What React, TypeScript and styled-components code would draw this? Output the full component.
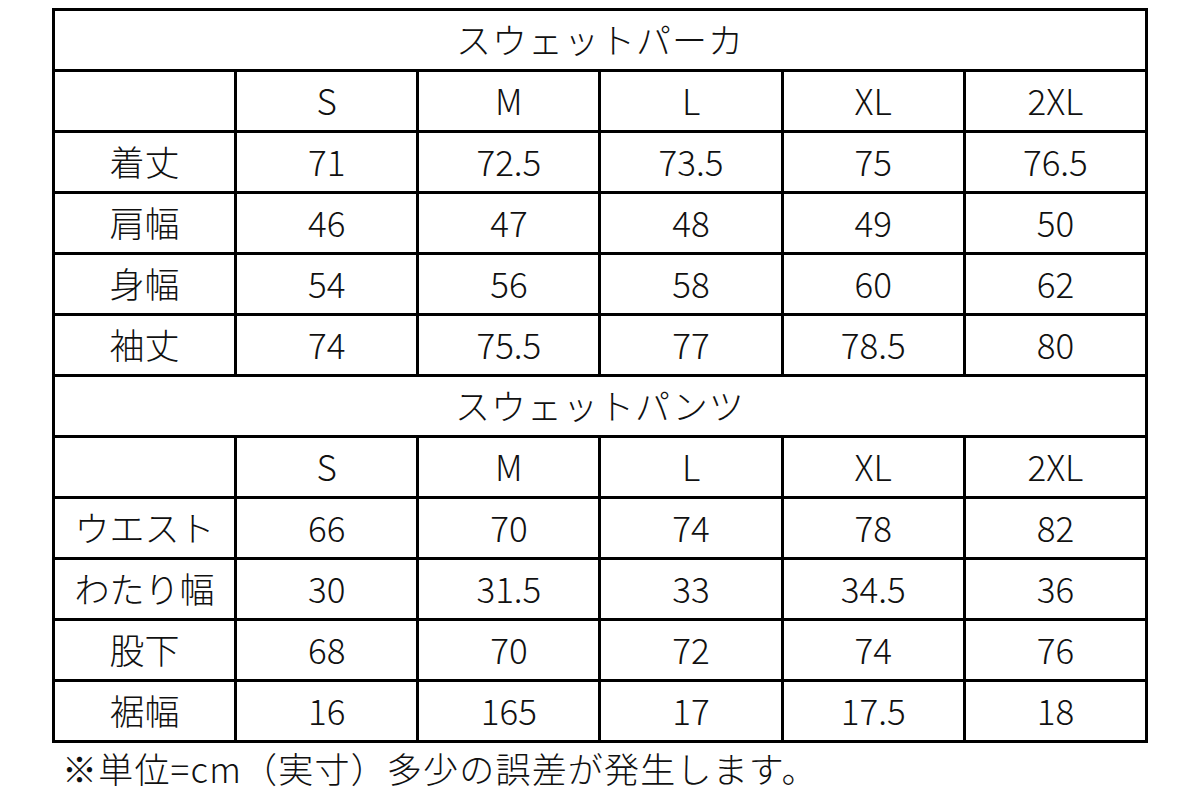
import React from 'react';
import styled, { createGlobalStyle } from 'styled-components';

const GlobalStyle = createGlobalStyle`
  html, body {
    margin: 0;
    padding: 0;
    background: #fff;
  }
  body {
    font-family: "Noto Sans CJK JP", "Noto Sans", sans-serif;
    color: #111;
  }
`;

const Page = styled.div`
  width: 1200px;
  height: 800px;
  padding: 8px 52px 0 52px;
  box-sizing: border-box;
`;

const Table = styled.table`
  width: 1096px;
  border-collapse: collapse;
  table-layout: fixed;
  border: 3px solid #000;
`;

const Cell = styled.td`
  height: 55px;
  padding: 0 0 3px 0;
  border: 3px solid #000;
  text-align: center;
  vertical-align: middle;
  font-size: 35px;
  font-weight: 300;
  line-height: 1;
  white-space: nowrap;
`;

const TitleCell = styled(Cell)`
  letter-spacing: 1px;
`;

const Note = styled.p`
  margin: 6px 0 0 10px;
  font-size: 35px;
  font-weight: 300;
  letter-spacing: 1.2px;
  line-height: 1.1;
  white-space: nowrap;
`;

const sizes = ['S', 'M', 'L', 'XL', '2XL'];

const parka: [string, string[]][] = [
  ['着丈', ['71', '72.5', '73.5', '75', '76.5']],
  ['肩幅', ['46', '47', '48', '49', '50']],
  ['身幅', ['54', '56', '58', '60', '62']],
  ['袖丈', ['74', '75.5', '77', '78.5', '80']],
];

const pants: [string, string[]][] = [
  ['ウエスト', ['66', '70', '74', '78', '82']],
  ['わたり幅', ['30', '31.5', '33', '34.5', '36']],
  ['股下', ['68', '70', '72', '74', '76']],
  ['裾幅', ['16', '165', '17', '17.5', '18']],
];

const Section: React.FC<{ title: string; rows: [string, string[]][] }> = ({ title, rows }) => (
  <>
    <tr>
      <TitleCell colSpan={6}>{title}</TitleCell>
    </tr>
    <tr>
      <Cell />
      {sizes.map((s) => (
        <Cell key={s}>{s}</Cell>
      ))}
    </tr>
    {rows.map(([label, vals]) => (
      <tr key={label}>
        <Cell>{label}</Cell>
        {vals.map((v, i) => (
          <Cell key={i}>{v}</Cell>
        ))}
      </tr>
    ))}
  </>
);

export default function App() {
  return (
    <Page>
      <GlobalStyle />
      <Table>
        <tbody>
          <Section title="スウェットパーカ" rows={parka} />
          <Section title="スウェットパンツ" rows={pants} />
        </tbody>
      </Table>
      <Note>※単位=cm（実寸）多少の誤差が発生します。</Note>
    </Page>
  );
}
